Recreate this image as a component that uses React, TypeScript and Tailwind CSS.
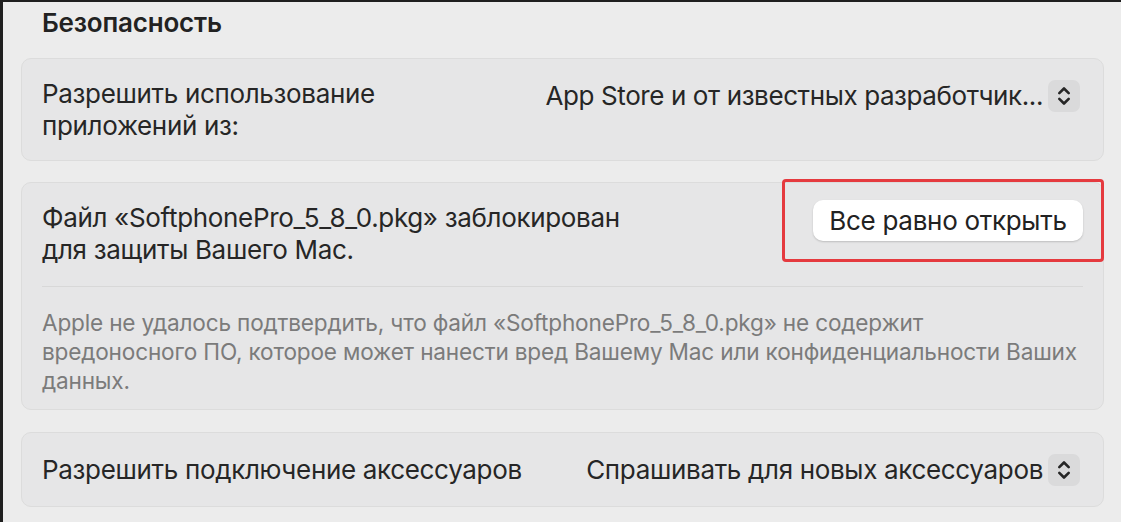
import React from "react";

function Stepper() {
  return (
    <div className="w-[32px] h-[32px] rounded-[7px] bg-[#dadadb] flex items-center justify-center shrink-0">
      <svg width="14" height="22" viewBox="0 0 14 22" fill="none">
        <path d="M2.3 8.2 L7 3.5 L11.7 8.2" stroke="#262626" strokeWidth="2.6" strokeLinecap="round" strokeLinejoin="round" />
        <path d="M2.3 13.8 L7 18.5 L11.7 13.8" stroke="#262626" strokeWidth="2.6" strokeLinecap="round" strokeLinejoin="round" />
      </svg>
    </div>
  );
}

export default function App() {
  return (
    <div
      className="w-[1121px] h-[522px] bg-[#1f1f1f] pt-[2px] pl-[3px] overflow-hidden text-[#262626]"
      style={{ fontFamily: "Inter, 'Noto Sans', sans-serif" }}
    >
      <div className="h-full bg-[#ececec] pl-[18px] pr-[17px] flex flex-col">
        <div className="pl-[21px] pt-[6px] h-[56px] text-[26px] font-semibold leading-[30px] tracking-[-0.2px] text-[#222]">
          Безопасность
        </div>

        <div className="h-[103px] rounded-[10px] bg-[#e6e6e7] border border-[#dcdcdc] flex items-center justify-between pl-[20px] pr-[23px]">
          <div className="text-[26px] leading-[32px] tracking-[-0.33px]">
            Разрешить использование
            <br />
            приложений из:
          </div>
          <div className="flex items-center gap-[5px] self-start mt-[21px]">
            <span className="text-[26px] leading-[32px] tracking-[-0.4px] whitespace-nowrap">App Store и от известных разработчик...</span>
            <Stepper />
          </div>
        </div>

        <div className="mt-[21px] h-[228px] rounded-[10px] bg-[#e6e6e7] border border-[#dcdcdc] relative px-[20px]">
          <div className="flex items-start justify-between pt-[19px] pb-[20px] border-b border-[#d8d8d8]">
            <div className="text-[26px] leading-[32px] tracking-[-0.33px]">
              Файл «SoftphonePro_5_8_0.pkg» заблокирован
              <br />
              для защиты Вашего Mac.
            </div>
            <button className="mt-[-2px] w-[270px] h-[41px] rounded-[10px] bg-white shadow-[0_1px_2px_rgba(0,0,0,0.18)] text-[26px] tracking-[-0.3px] text-[#222] flex items-center justify-center">
              Все равно открыть
            </button>
          </div>
          <div className="pt-[21px] text-[22.6px] leading-[29px] text-[#7b7b7b] tracking-[-0.18px] whitespace-nowrap">
            Apple не удалось подтвердить, что файл «SoftphonePro_5_8_0.pkg» не содержит
            <br />
            вредоносного ПО, которое может нанести вред Вашему Mac или конфиденциальности Ваших
            <br />
            данных.
          </div>
          <div className="absolute left-[760px] top-[-4px] w-[322px] h-[83px] border-[3px] border-[#e53a3f] rounded-[4px] pointer-events-none" />
        </div>

        <div className="mt-[22px] h-[75px] rounded-[10px] bg-[#e6e6e7] border border-[#dcdcdc] flex items-center justify-between pl-[20px] pr-[23px]">
          <span className="text-[26px] leading-[32px] tracking-[-0.33px]">Разрешить подключение аксессуаров</span>
          <div className="flex items-center gap-[5px]">
            <span className="text-[26px] leading-[32px] tracking-[-0.33px] whitespace-nowrap">Спрашивать для новых аксессуаров</span>
            <Stepper />
          </div>
        </div>
      </div>
    </div>
  );
}
